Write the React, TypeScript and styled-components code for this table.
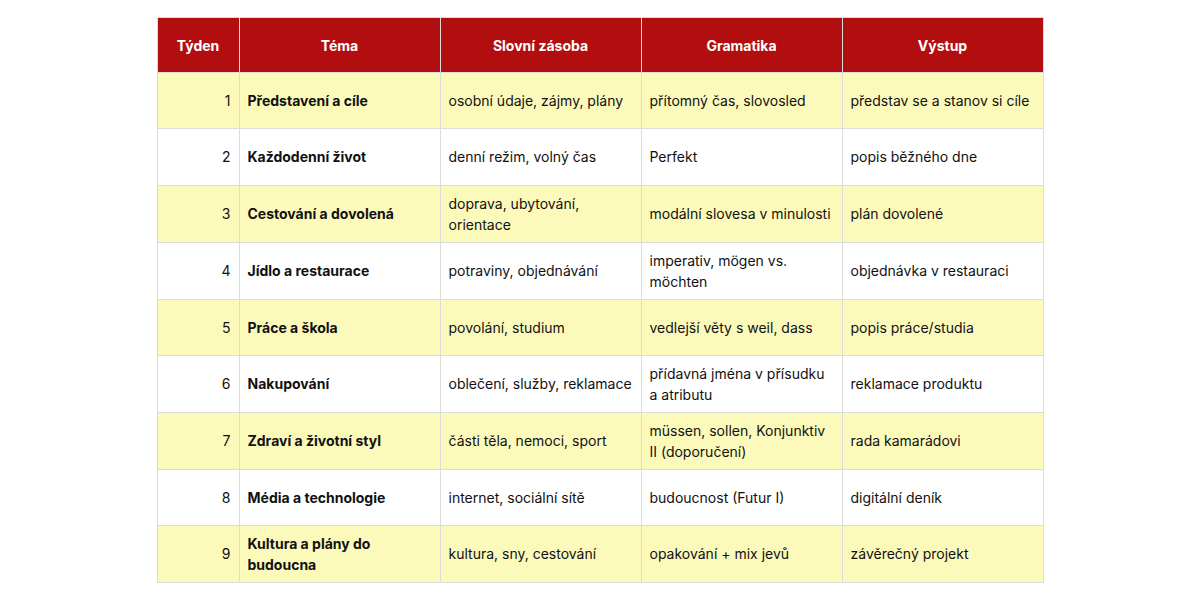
import { FC } from "react";
import styled, { createGlobalStyle } from "styled-components";

const GlobalStyle = createGlobalStyle`
  html, body {
    margin: 0;
    padding: 0;
    background: #ffffff;
  }
`;

const Page = styled.div`
  width: 1200px;
  height: 600px;
  display: flex;
  align-items: center;
  justify-content: center;
  font-family: Inter, "Noto Sans", sans-serif;
`;

const Table = styled.table`
  width: 886px;
  border-collapse: collapse;
  table-layout: fixed;
  font-size: 14px;
  line-height: 21px;
  color: #111111;
`;

const HeadCell = styled.th<{ $w: number }>`
  width: ${(p) => p.$w}px;
  height: 55px;
  padding: 0 8px;
  box-sizing: border-box;
  background: #b20e10;
  color: #ffffff;
  font-weight: 700;
  text-align: center;
  border: 1px solid #dcdcdc;
`;

const Row = styled.tr<{ $odd: boolean }>`
  height: 56.2px;
  background: ${(p) => (p.$odd ? "#fcfabb" : "#ffffff")};
`;

const Cell = styled.td<{ $right?: boolean; $bold?: boolean }>`
  padding: 7px 8px;
  vertical-align: middle;
  text-align: ${(p) => (p.$right ? "right" : "left")};
  font-weight: ${(p) => (p.$bold ? 700 : 400)};
  border: 1px solid #dcdcdc;
`;

const columns = [
  { title: "Týden", w: 82 },
  { title: "Téma", w: 201 },
  { title: "Slovní zásoba", w: 201 },
  { title: "Gramatika", w: 201 },
  { title: "Výstup", w: 201 },
];

const rows = [
  ["Představení a cíle", "osobní údaje, zájmy, plány", "přítomný čas, slovosled", "představ se a stanov si cíle"],
  ["Každodenní život", "denní režim, volný čas", "Perfekt", "popis běžného dne"],
  ["Cestování a dovolená", "doprava, ubytování, orientace", "modální slovesa v minulosti", "plán dovolené"],
  ["Jídlo a restaurace", "potraviny, objednávání", "imperativ, mögen vs. möchten", "objednávka v restauraci"],
  ["Práce a škola", "povolání, studium", "vedlejší věty s weil, dass", "popis práce/studia"],
  ["Nakupování", "oblečení, služby, reklamace", "přídavná jména v přísudku a atributu", "reklamace produktu"],
  ["Zdraví a životní styl", "části těla, nemoci, sport", "müssen, sollen, Konjunktiv II (doporučení)", "rada kamarádovi"],
  ["Média a technologie", "internet, sociální sítě", "budoucnost (Futur I)", "digitální deník"],
  ["Kultura a plány do budoucna", "kultura, sny, cestování", "opakování + mix jevů", "závěrečný projekt"],
];

const App: FC = () => {
  return (
    <>
      <GlobalStyle />
      <Page>
        <Table>
          <thead>
            <tr>
              {columns.map((c) => (
                <HeadCell key={c.title} $w={c.w}>
                  {c.title}
                </HeadCell>
              ))}
            </tr>
          </thead>
          <tbody>
            {rows.map((r, i) => (
              <Row key={i} $odd={i % 2 === 0}>
                <Cell $right>{i + 1}</Cell>
                <Cell $bold>{r[0]}</Cell>
                <Cell>{r[1]}</Cell>
                <Cell>{r[2]}</Cell>
                <Cell>{r[3]}</Cell>
              </Row>
            ))}
          </tbody>
        </Table>
      </Page>
    </>
  );
};

export default App;
